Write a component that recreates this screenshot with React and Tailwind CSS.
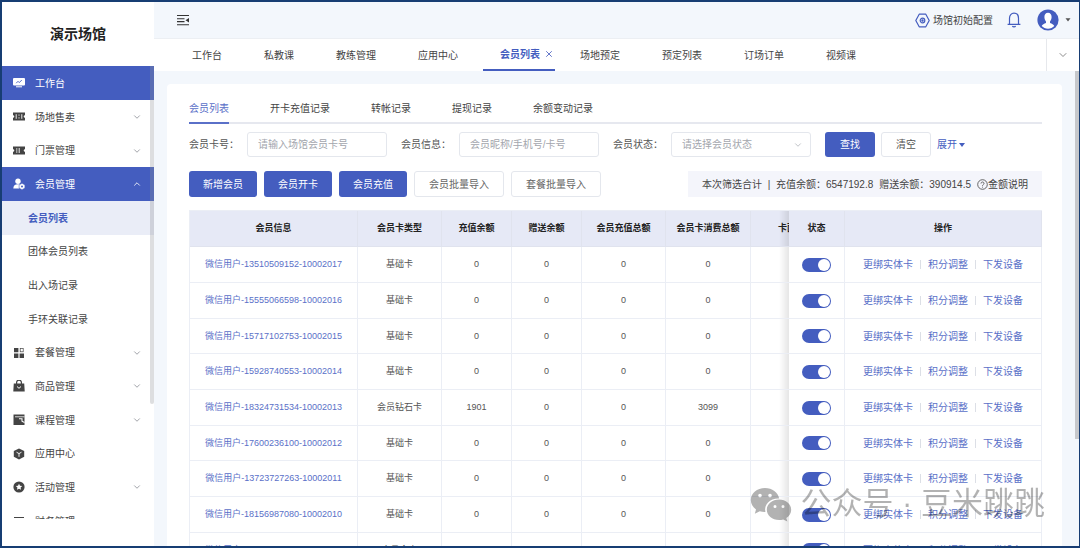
import { useState } from 'react';
import { ChevronDown, ChevronUp, X } from 'lucide-react';

const menu = [
  { label: '工作台', icon: 'board', active: true },
  { label: '场地售卖', icon: 'venue', arrow: 'down' },
  { label: '门票管理', icon: 'ticket', arrow: 'down' },
  { label: '会员管理', icon: 'member', arrow: 'up', active: true },
  { label: '会员列表', sub: true, current: true },
  { label: '团体会员列表', sub: true },
  { label: '出入场记录', sub: true },
  { label: '手环关联记录', sub: true },
  { label: '套餐管理', icon: 'grid', arrow: 'down' },
  { label: '商品管理', icon: 'bag', arrow: 'down' },
  { label: '课程管理', icon: 'course', arrow: 'down' },
  { label: '应用中心', icon: 'cube' },
  { label: '活动管理', icon: 'activity', arrow: 'down' },
  { label: '财务管理', icon: 'finance', arrow: 'down' },
];

const pageTabs = ['工作台', '私教课', '教练管理', '应用中心', '会员列表', '场地预定', '预定列表', '订场订单', '视频课'];
const subTabs = ['会员列表', '开卡充值记录', '转帐记录', '提现记录', '余额变动记录'];

const columns = [
  { key: 'name', label: '会员信息' },
  { key: 'type', label: '会员卡类型' },
  { key: 'balance', label: '充值余额' },
  { key: 'gift', label: '赠送余额' },
  { key: 'total', label: '会员充值总额' },
  { key: 'spent', label: '会员卡消费总额' },
  { key: 'face', label: '卡面余额' },
];

const members = [
  { name: '微信用户-13510509152-10002017', type: '基础卡', balance: 0, gift: 0, total: 0, spent: 0 },
  { name: '微信用户-15555066598-10002016', type: '基础卡', balance: 0, gift: 0, total: 0, spent: 0 },
  { name: '微信用户-15717102753-10002015', type: '基础卡', balance: 0, gift: 0, total: 0, spent: 0 },
  { name: '微信用户-15928740553-10002014', type: '基础卡', balance: 0, gift: 0, total: 0, spent: 0 },
  { name: '微信用户-18324731534-10002013', type: '会员钻石卡', balance: 1901, gift: 0, total: 0, spent: 3099 },
  { name: '微信用户-17600236100-10002012', type: '基础卡', balance: 0, gift: 0, total: 0, spent: 0 },
  { name: '微信用户-13723727263-10002011', type: '基础卡', balance: 0, gift: 0, total: 0, spent: 0 },
  { name: '微信用户-18156987080-10002010', type: '基础卡', balance: 0, gift: 0, total: 0, spent: 0 },
  { name: '微信用户-17753047922-10002009', type: '会员金卡', balance: 1945, gift: 1995, total: 5000, spent: 195 },
];

const icons = {
  board: (
    <>
      <rect x="0" y="1" width="12" height="7.500" rx="1" fill="currentColor" />
      <path d="M3.200 6.200 5 4.300 6.300 5.600 8.800 3" fill="none" stroke="#445dbf" strokeWidth=".9" />
      <path d="M3 9.800h6" stroke="currentColor" strokeWidth="1" />
    </>
  ),
  venue: (
    <>
      <path d="M0 1.500h12v2.700a1.200 1.200 0 0 0 0 2.600v2.700H0V6.800a1.200 1.200 0 0 0 0-2.600z" fill="currentColor" />
      <path d="M3.200 3.200v4.600M8.800 3.200v4.600" stroke="#fff" strokeWidth=".9" />
      <path d="M6 3.500v1.200M6 6.300v1.200" stroke="#fff" strokeWidth=".9" />
    </>
  ),
  ticket: (
    <>
      <path d="M0 1.500h12v2.700a1.200 1.200 0 0 0 0 2.600v2.700H0V6.800a1.200 1.200 0 0 0 0-2.600z" fill="currentColor" />
      <path d="M3.800 3v5" stroke="#fff" strokeWidth=".7" />
      <path d="M6.200 3v5" stroke="#fff" strokeWidth=".9" />
    </>
  ),
  member: (
    <>
      <circle cx="5" cy="3.200" r="2.700" fill="currentColor" />
      <path d="M.300 10.500c0-2.700 1.600-4.200 4.600-4.200 1 0 1.700.1 2.400.5L6.200 10.500z" fill="currentColor" />
      <path d="M9 5.300 11.900 6.900v3.200L9 11.700 6.100 10.100V6.900z" fill="currentColor" stroke="#445dbf" strokeWidth=".5" />
      <circle cx="9" cy="8.500" r="1" fill="#445dbf" />
    </>
  ),
  grid: (
    <>
      <path d="M1 1h4.400v4.300H1zM1 6.500h4.400V11H1zM6.600 6.500H11V11H6.600z" fill="currentColor" />
      <rect x="7.200" y="1.500" width="3" height="3.300" fill="none" stroke="currentColor" strokeWidth=".7" />
    </>
  ),
  bag: (
    <>
      <path d="M.800 3.500h10.400l.5 8H.300z" fill="currentColor" />
      <path d="M3.600 4V2.600a2.400 2.400 0 0 1 4.800 0V4" fill="none" stroke="currentColor" strokeWidth="1.200" />
      <path d="M4 6.500 6 8.300 8 6.500" fill="none" stroke="#fff" strokeWidth="1" />
    </>
  ),
  course: (
    <>
      <path d="M.500.500h11v10.500H.500z" fill="currentColor" />
      <path d="M2 2.800h9.500" stroke="#fff" strokeWidth=".8" />
      <path d="M6 4.800h3v2.400l2.500 1.300" fill="none" stroke="#fff" strokeWidth="1.100" />
    </>
  ),
  cube: (
    <>
      <path d="M6 .500 11.200 3v5.800L6 11.500.800 8.800V3z" fill="currentColor" />
      <path d="M3.500 4.200 6 5.600l2.500-1.400M6 5.600v3.200" fill="none" stroke="#fff" strokeWidth=".9" />
    </>
  ),
  activity: (
    <>
      <circle cx="6" cy="6" r="5.600" fill="currentColor" />
      <path d="M6 2.800l1 2 2.200.3-1.600 1.500.4 2.200-2-1-2 1 .4-2.200L2.800 5.100 5 4.800z" fill="#fff" />
    </>
  ),
  finance: (
    <path d="M1 2.500h10M.500 4.500h11M.500 7.500h11M1 10h10" stroke="currentColor" strokeWidth="1.200" />
  ),
};

function MenuIcon({ name }) {
  return <svg viewBox="0 0 12 12" className="h-3 w-3 shrink-0">{icons[name]}</svg>;
}

function MenuItem({ item }) {
  const Arrow = item.arrow === 'up' ? ChevronUp : ChevronDown;
  if (item.sub) {
    return (
      <li className="h-[34px] nth-[3n]:h-[33px]">
        <a href="#" className={`flex h-full items-center pl-[26px] ${item.current ? 'bg-[#eaedf7] font-bold text-[#445dbf]' : ''}`}>{item.label}</a>
      </li>
    );
  }
  return (
    <li className="h-[34px] nth-[3n]:h-[33px]">
      <a href="#" className={`flex h-full items-center gap-[10px] pr-3 pl-[11px] ${item.active ? 'bg-[#445dbf] text-white' : ''}`}>
        <MenuIcon name={item.icon} />
        <span className="flex-1">{item.label}</span>
        {item.arrow && <Arrow className={`h-[10px] w-[10px] ${item.active ? '' : 'text-[#8f9299]'}`} strokeWidth={2} />}
      </a>
    </li>
  );
}

function Sidebar() {
  return (
    <aside className="relative flex w-[152px] shrink-0 flex-col bg-white">
      <h1 className="flex h-16 shrink-0 items-center justify-center text-sm font-bold text-[#222]">演示场馆</h1>
      <nav className="mb-[27px] min-h-0 flex-1 overflow-hidden text-[#444]">
        <ul>
          {menu.map((item) => <MenuItem key={item.icon || `sub-${item.label}`} item={item} />)}
        </ul>
      </nav>
      <div className="absolute top-16 right-0 h-[338px] w-1 rounded-b bg-[#909399]/30" />
    </aside>
  );
}

function Header() {
  return (
    <header className="flex h-9 shrink-0 items-center bg-[#f3f7fc] pr-2 pl-[23px]">
      <button aria-label="收起菜单">
        <svg viewBox="0 0 12 12" className="h-3 w-3 text-[#333]">
          <path d="M0 1.500h12M0 4.700h7.500M0 7.600h7.500M0 10.700h12" stroke="currentColor" strokeWidth="1.100" />
          <path d="M12 4v4.400L8.500 6.200z" fill="currentColor" />
        </svg>
      </button>
      <a href="#" className="ml-auto flex items-center gap-[3px] text-[#444]">
        <svg viewBox="0 0 15 15" className="h-[15px] w-[15px] text-[#445dbf]" fill="none" stroke="currentColor" strokeWidth="1.200">
          <path d="M4.200 1.200h6.600L14.200 7.500l-3.400 6.300H4.200L.800 7.500z" strokeLinejoin="round" />
          <circle cx="7.500" cy="7.500" r="2.300" />
          <circle cx="7.500" cy="7.500" r=".6" />
        </svg>
        场馆初始配置
      </a>
      <button aria-label="消息" className="ml-[14px] text-[#445dbf]">
        <svg viewBox="0 0 14 16" className="h-4 w-[14px]" fill="none" stroke="currentColor" strokeWidth="1.200">
          <path d="M2.500 12V6.200C2.500 3.200 4.300 1.200 7 1.200s4.500 2 4.500 5V12M.600 12.400h12.800" />
          <path d="M5.300 14.200c.8.900 2.600.9 3.400 0" />
        </svg>
      </button>
      <button aria-label="账户" className="ml-4 flex items-center gap-[6px]">
        <svg viewBox="0 0 22 22" className="h-[22px] w-[22px]">
          <circle cx="11" cy="11" r="10.600" fill="#445dbf" />
          <path d="M11 3.800c2.300 0 3.600 1.700 3.600 4.200 0 1.900-.7 3.500-1.600 4.400v1.500c1.900.6 3.600 1.400 4.300 3.200-1.500 1.700-3.800 2.600-6.300 2.600s-4.800-.9-6.300-2.600c.7-1.800 2.400-2.600 4.300-3.200v-1.500C8.100 11.500 7.400 9.900 7.400 8c0-2.500 1.300-4.200 3.600-4.200z" fill="#fff" />
        </svg>
        <svg viewBox="0 0 6 4" className="h-1 w-[6px]"><path d="M.500.300h5L3 3.600z" fill="#555" /></svg>
      </button>
    </header>
  );
}

function PageTabs() {
  return (
    <div className="flex h-[33px] shrink-0 border-t border-[#eceff3] bg-white">
      <nav className="flex min-w-0 flex-1 gap-2 pl-[21px] text-[#444]">
        {pageTabs.map((tab) => (
          tab === '会员列表' ? (
            <div key={tab} className="flex items-center gap-1 border-b-2 border-[#445dbf] pl-[17px] text-[#445dbf]">
              <a href="#" className="font-bold">{tab}</a>
              <button aria-label="关闭" className="pr-px"><X className="h-[10px] w-[10px]" strokeWidth={2} /></button>
            </div>
          ) : (
            <a key={tab} href="#" className="flex items-center px-[17px]">{tab}</a>
          )
        ))}
      </nav>
      <button aria-label="更多标签" className="flex w-[33px] items-center justify-center border-l border-[#e6e8ec] text-[#666]">
        <ChevronDown className="h-3 w-3" strokeWidth={1.5} />
      </button>
    </div>
  );
}

function Filters() {
  const field = 'h-[25px] w-[140px] rounded-[3px] border border-[#e4e7ed] bg-white px-[10px] text-[10px] placeholder-[#a3a6ad] outline-none';
  return (
    <form className="mt-2 flex items-center gap-[14px] whitespace-nowrap" onSubmit={(e) => e.preventDefault()}>
      <div className="flex items-center gap-2">
        <label htmlFor="card">会员卡号：</label>
        <input id="card" className={field} placeholder="请输入场馆会员卡号" />
      </div>
      <div className="flex items-center gap-2">
        <label htmlFor="info">会员信息：</label>
        <input id="info" className={field} placeholder="会员昵称/手机号/卡号" />
      </div>
      <div className="relative flex items-center gap-2">
        <label htmlFor="status">会员状态：</label>
        <select id="status" defaultValue="" className={`${field} appearance-none text-[#a3a6ad]`}>
          <option value="">请选择会员状态</option>
        </select>
        <ChevronDown className="pointer-events-none absolute right-2 h-[10px] w-[10px] text-[#b4b7bd]" />
      </div>
      <div className="flex items-center gap-[6px]">
        <button type="submit" className="h-[25px] w-[50px] rounded-[3px] bg-[#445dbf] text-white">查找</button>
        <button type="reset" className="h-[25px] w-[50px] rounded-[3px] border border-[#e4e7ed] bg-white">清空</button>
        <button type="button" className="flex items-center gap-[2px] text-[#445dbf]">
          展开
          <svg viewBox="0 0 6 4" className="h-1 w-[6px]"><path d="M0 0h6L3 4z" fill="currentColor" /></svg>
        </button>
      </div>
    </form>
  );
}

function Toolbar() {
  return (
    <div className="mt-[14px] flex items-center justify-between whitespace-nowrap">
      <div className="flex gap-[7px]">
        {['新增会员', '会员开卡', '会员充值'].map((label) => (
          <button key={label} className="h-[26px] rounded-[3px] bg-[#445dbf] px-[14px] text-white">{label}</button>
        ))}
        {['会员批量导入', '套餐批量导入'].map((label) => (
          <button key={label} className="h-[26px] rounded-[3px] border border-[#e4e7ed] bg-white px-[14px] text-[#666]">{label}</button>
        ))}
      </div>
      <div className="flex h-[26px] items-center bg-[#f4f5fb] px-[14px] text-[#444]">
        <span>本次筛选合计</span>
        <span className="w-[14px] text-center">|</span>
        <span>充值余额：6547192.8</span>
        <span className="ml-[6px]">赠送余额：390914.5</span>
        <button className="ml-[6px] flex items-center">
          <svg viewBox="0 0 11 11" className="h-[11px] w-[11px]" fill="none" stroke="currentColor" strokeWidth=".8">
            <circle cx="5.500" cy="5.500" r="4.800" />
            <path d="M4 4.500c0-2 3-2 3 0 0 1-1.500 1.200-1.500 2.300M5.500 7.700v.9" />
          </svg>
          金额说明
        </button>
      </div>
    </div>
  );
}

function MemberTable() {
  const [off, setOff] = useState([]);
  const toggle = (name) => setOff((list) => (list.includes(name) ? list.filter((n) => n !== name) : [...list, name]));
  const head = 'border-r border-b border-[#e0e3ee] bg-[#e6e9f6] font-bold text-[#222]';
  const cell = 'border-r border-b border-[#ebeef5]';
  // soft edge to the left of the pinned columns
  const fixed = 'sticky right-[197px] before:absolute before:inset-y-0 before:-left-[10px] before:w-[10px] before:bg-linear-to-l before:from-black/10 before:to-transparent';

  return (
    <div className="mt-[13px] overflow-hidden border-t border-l border-[#ebeef5]">
      <table className="w-[905px] min-w-full table-fixed border-separate border-spacing-0 text-center text-[9px] whitespace-nowrap">
        <colgroup>
          <col className="w-[168px]" />
          <col className="w-[84px]" />
          <col className="w-[70px]" />
          <col className="w-[70px]" />
          <col className="w-[84px]" />
          <col className="w-[85px]" />
          <col className="w-[91px]" />
          <col className="w-[56px]" />
          <col className="w-[197px]" />
        </colgroup>
        <thead>
          <tr className="h-9">
            {columns.map((col) => <th key={col.key} className={head}>{col.label}</th>)}
            <th className={`${head} ${fixed}`}>状态</th>
            <th className={`${head} sticky right-0`}>操作</th>
          </tr>
        </thead>
        <tbody>
          {members.map((row) => (
            <tr key={row.name} className="h-9 nth-[3n]:h-[35px]">
              {columns.map((col) => (
                <td key={col.key} className={cell}>
                  {col.key === 'name' ? <a href="#" className="text-[#5a70c8]">{row.name}</a> : row[col.key]}
                </td>
              ))}
              <td className={`${cell} ${fixed} bg-white`}>
                <input
                  type="checkbox"
                  role="switch"
                  aria-label={`${row.name} 状态`}
                  checked={!off.includes(row.name)}
                  onChange={() => toggle(row.name)}
                  className="mx-auto flex h-[14px] w-[29px] appearance-none items-center rounded-full bg-[#c0c4cc] px-px before:h-3 before:w-3 before:rounded-full before:bg-white checked:justify-end checked:bg-[#445dbf]"
                />
              </td>
              <td className={`${cell} sticky right-0 bg-white text-[10px] text-[#5a70c8]`}>
                <div className="flex items-center justify-center gap-[7px]">
                  <a href="#">更绑实体卡</a>
                  <span className="h-[9px] w-px bg-[#dcdfe6]" />
                  <a href="#">积分调整</a>
                  <span className="h-[9px] w-px bg-[#dcdfe6]" />
                  <a href="#">下发设备</a>
                </div>
              </td>
            </tr>
          ))}
        </tbody>
      </table>
    </div>
  );
}

function Watermark() {
  return (
    <div className="pointer-events-none absolute right-[34px] bottom-[22px] flex items-center gap-2 text-[31px] leading-10 whitespace-nowrap text-black/30">
      <svg viewBox="0 0 42 35" className="h-[35px] w-[42px]">
        <path
          fill="currentColor"
          fillRule="evenodd"
          d="M15 1C7 1 .800 6.300.800 13c0 3.900 2 7.200 5.200 9.400L4.800 26.800l5-2.600c1.700.500 3.500.8 5.600.7C13.600 17.500 20.500 11 29.200 11.500 28 5.300 22.200 1 15 1zM10 6.800a1.800 1.800 0 1 1 0 3.600 1.800 1.800 0 0 1 0-3.600zm10 0a1.800 1.800 0 1 1 0 3.600 1.800 1.800 0 0 1 0-3.600zM29 12.500c-6.800 0-12.200 4.500-12.200 10.200S22.200 33 29 33c1.500 0 2.900-.2 4.200-.600l4.200 2.200-1.100-3.600c3-1.900 4.900-4.900 4.900-8.300 0-5.700-5.400-10.200-12.200-10.200zm-4 5.500a1.500 1.500 0 1 1 0 3 1.500 1.500 0 0 1 0-3zm8 0a1.500 1.500 0 1 1 0 3 1.500 1.500 0 0 1 0-3z"
        />
      </svg>
      <span>公众号 · 豆米跳跳</span>
    </div>
  );
}

export default function App() {
  return (
    <div className="relative flex h-screen overflow-hidden border-2 border-r border-[#173d73] bg-[#f3f7fc] font-['Liberation_Sans','Noto_Sans_CJK_SC',sans-serif] text-[10px] leading-[15px] text-[#555]">
      <Sidebar />
      <div className="flex min-w-0 flex-1 flex-col">
        <Header />
        <PageTabs />
        <div className="relative flex min-h-0 flex-1 flex-col overflow-hidden pt-[13px] pr-[17px] pl-[13px]">
          <main className="flex-1 rounded-t bg-white pt-[17px] pr-5 pl-[22px]">
            <nav className="flex gap-[41px] border-b-2 border-[#e6e8ef] text-[#444]">
              {subTabs.map((tab, i) => (
                <a key={tab} href="#" className={`-mb-[2px] pb-[6px] ${i === 0 ? 'border-b-2 border-[#5a70c8] text-[#5a70c8]' : ''}`}>{tab}</a>
              ))}
            </nav>
            <Filters />
            <Toolbar />
            <MemberTable />
          </main>
          <div className="absolute top-0 right-0 h-[368px] w-1 bg-[#c6c8cc]" />
        </div>
      </div>
      <Watermark />
    </div>
  );
}
